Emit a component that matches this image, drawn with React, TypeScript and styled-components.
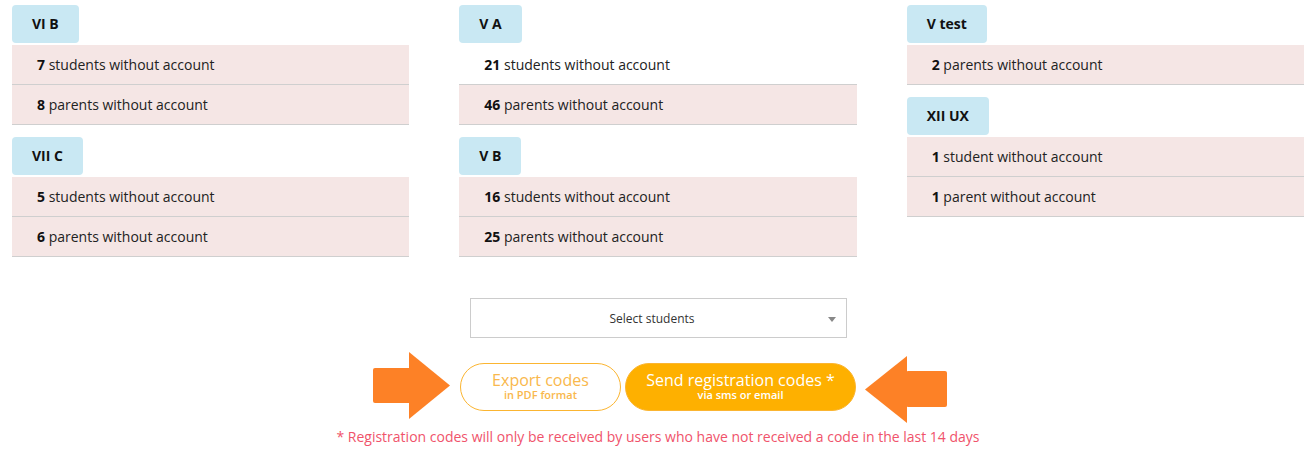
import React from 'react';
import styled, { createGlobalStyle } from 'styled-components';

const GlobalStyle = createGlobalStyle`
  body {
    margin: 0;
    background: #ffffff;
    font-family: 'Open Sans', 'Liberation Sans', sans-serif;
    color: #222222;
  }
`;

const Page = styled.div`
  padding: 5px 7px 0 12px;
`;

const Grid = styled.div`
  display: grid;
  grid-template-columns: repeat(3, 1fr);
  column-gap: 50px;
  align-items: start;
`;

const Column = styled.div`
  display: flex;
  flex-direction: column;
`;

const Group = styled.div`
  display: flex;
  flex-direction: column;
  & + & {
    margin-top: 12px;
  }
`;

const Tag = styled.div`
  align-self: flex-start;
  height: 38px;
  line-height: 38px;
  padding: 0 20px;
  margin-bottom: 2px;
  border-radius: 4px;
  background: #c9e8f3;
  font-size: 14px;
  font-weight: 700;
  color: #111;
`;

const Row = styled.div<{ $pink: boolean }>`
  height: 39px;
  line-height: 39px;
  padding-left: 25px;
  border-bottom: 1px solid #cfcfcf;
  background: ${(p) => (p.$pink ? '#f5e6e5' : '#ffffff')};
  font-size: 14px;
  color: #222;
  b {
    font-weight: 700;
    color: #111;
  }
`;

const Actions = styled.div`
  display: flex;
  flex-direction: column;
  align-items: center;
  margin-top: 41px;
`;

const SelectBox = styled.div`
  position: relative;
  box-sizing: border-box;
  width: 377px;
  height: 40px;
  padding-right: 12px;
  border: 1px solid #cccccc;
  display: flex;
  align-items: center;
  justify-content: center;
  font-size: 12px;
  color: #333;
`;

const Caret = styled.span`
  position: absolute;
  right: 10px;
  top: 18px;
  width: 0;
  height: 0;
  border-left: 4px solid transparent;
  border-right: 4px solid transparent;
  border-top: 5px solid #888;
`;

const ButtonRow = styled.div`
  display: flex;
  align-items: flex-start;
  margin-top: 14px;
  padding-left: 4px;
`;

const Arrow = styled.svg<{ $top: number; $gap: number }>`
  display: block;
  margin-top: ${(p) => p.$top}px;
  margin-right: ${(p) => (p.$gap > 0 ? p.$gap : 0)}px;
  margin-left: ${(p) => (p.$gap < 0 ? -p.$gap : 0)}px;
`;

const Pill = styled.button<{ $filled: boolean; $w: number }>`
  box-sizing: border-box;
  width: ${(p) => p.$w}px;
  height: 48px;
  margin-top: 11px;
  border-radius: 24px;
  border: 1px solid #fbb531;
  background: ${(p) => (p.$filled ? '#feb000' : '#ffffff')};
  color: ${(p) => (p.$filled ? '#ffffff' : '#f9b84c')};
  display: flex;
  flex-direction: column;
  align-items: center;
  justify-content: center;
  font-family: 'Open Sans', 'Liberation Sans', sans-serif;
  padding: 0 0 2px;
  cursor: pointer;
  & + & {
    margin-left: 4px;
  }
`;

const PillTitle = styled.span`
  font-size: 16px;
  line-height: 18px;
`;

const PillSub = styled.span`
  font-size: 11px;
  line-height: 12px;
  font-weight: 600;
`;

const Note = styled.p`
  margin: 4px 0 0;
  font-size: 14px;
  line-height: 20px;
  color: #f0536b;
  text-align: center;
`;

type Item = { n: number; label: string; pink: boolean };
type Klass = { name: string; items: Item[] };

const columns: Klass[][] = [
  [
    {
      name: 'VI B',
      items: [
        { n: 7, label: 'students without account', pink: true },
        { n: 8, label: 'parents without account', pink: true },
      ],
    },
    {
      name: 'VII C',
      items: [
        { n: 5, label: 'students without account', pink: true },
        { n: 6, label: 'parents without account', pink: true },
      ],
    },
  ],
  [
    {
      name: 'V A',
      items: [
        { n: 21, label: 'students without account', pink: false },
        { n: 46, label: 'parents without account', pink: true },
      ],
    },
    {
      name: 'V B',
      items: [
        { n: 16, label: 'students without account', pink: true },
        { n: 25, label: 'parents without account', pink: true },
      ],
    },
  ],
  [
    {
      name: 'V test',
      items: [{ n: 2, label: 'parents without account', pink: true }],
    },
    {
      name: 'XII UX',
      items: [
        { n: 1, label: 'student without account', pink: true },
        { n: 1, label: 'parent without account', pink: true },
      ],
    },
  ],
];

const App: React.FC = () => {
  return (
    <>
      <GlobalStyle />
      <Page>
        <Grid>
          {columns.map((col, ci) => (
            <Column key={ci}>
              {col.map((k) => (
                <Group key={k.name}>
                  <Tag>{k.name}</Tag>
                  {k.items.map((it, i) => (
                    <Row key={i} $pink={it.pink}>
                      <b>{it.n}</b> {it.label}
                    </Row>
                  ))}
                </Group>
              ))}
            </Column>
          ))}
        </Grid>

        <Actions>
          <SelectBox>
            Select students
            <Caret />
          </SelectBox>

          <ButtonRow>
            <Arrow $top={0} $gap={9} width="78" height="67" viewBox="0 0 78 67">
              <rect x="0" y="16" width="38" height="35" rx="2" fill="#fd8126" />
              <polygon points="36,0 77,33.5 36,67" fill="#fd8126" />
            </Arrow>
            <Pill $filled={false} $w={161}>
              <PillTitle>Export codes</PillTitle>
              <PillSub>in PDF format</PillSub>
            </Pill>
            <Pill $filled $w={231}>
              <PillTitle>Send registration codes *</PillTitle>
              <PillSub>via sms or email</PillSub>
            </Pill>
            <Arrow $top={4} $gap={-9} width="82" height="67" viewBox="0 0 82 67">
              <polygon points="0,33.5 42,0 42,67" fill="#fd8126" />
              <rect x="41" y="15" width="41" height="36" rx="2" fill="#fd8126" />
            </Arrow>
          </ButtonRow>

          <Note>
            * Registration codes will only be received by users who have not received a code in the last 14 days
          </Note>
        </Actions>
      </Page>
    </>
  );
};

export default App;
